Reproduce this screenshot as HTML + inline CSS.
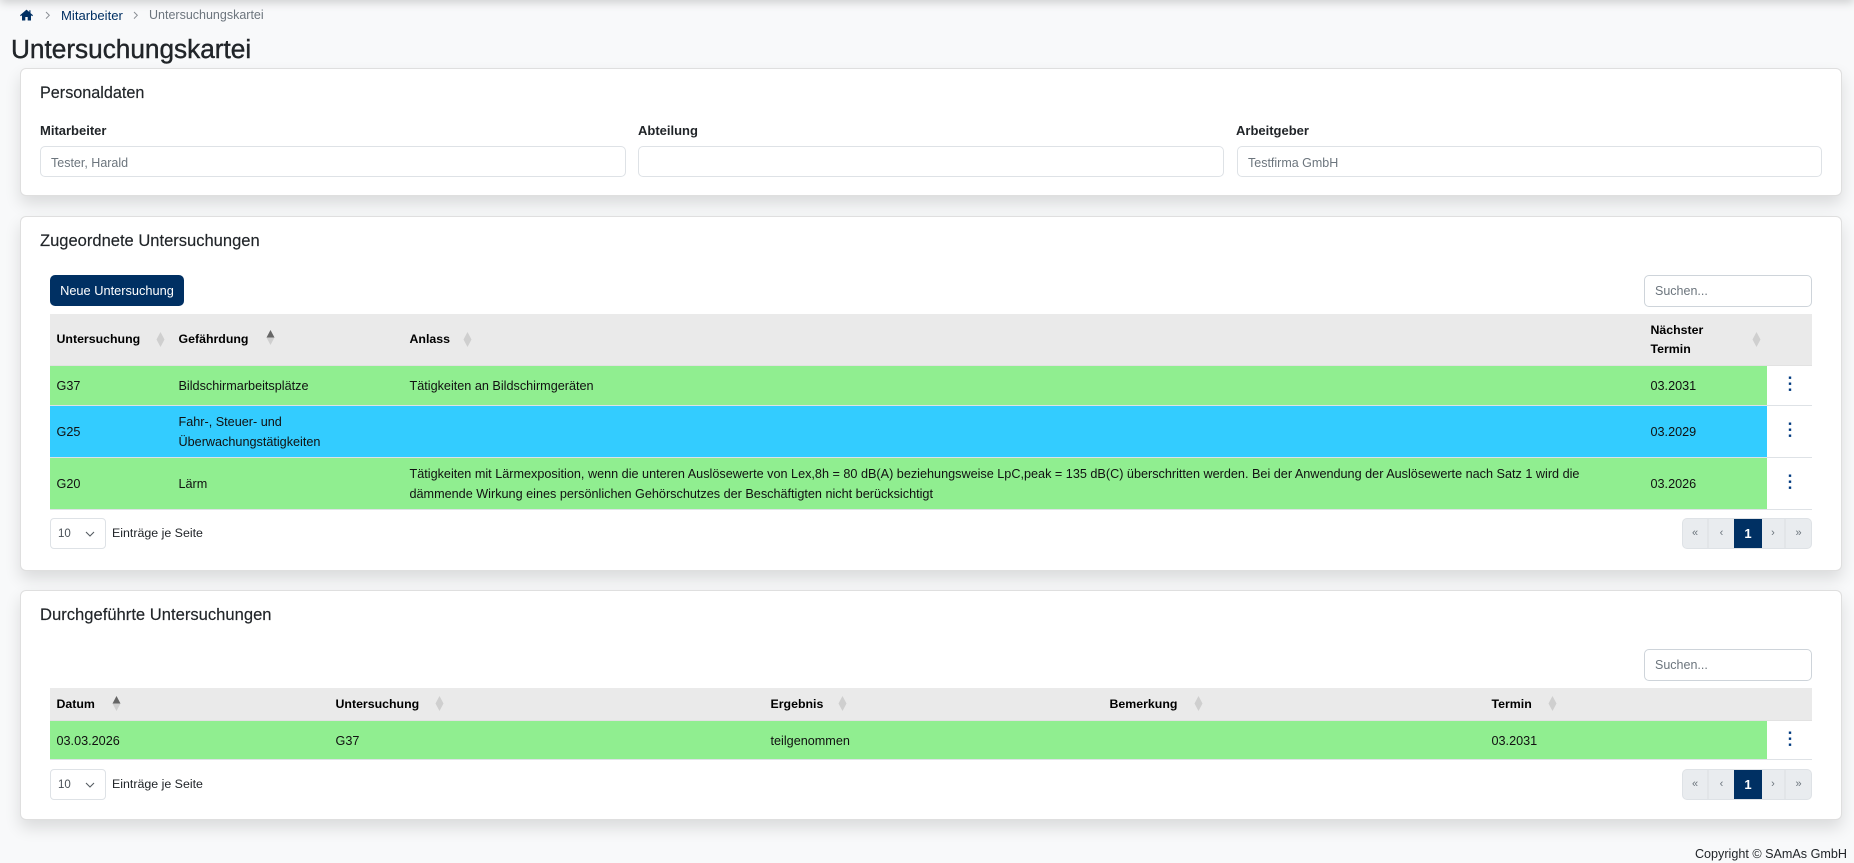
<!DOCTYPE html>
<html lang="de"><head><meta charset="utf-8"><title>Untersuchungskartei</title>
<style>
*{box-sizing:border-box}
html,body{margin:0;padding:0}
body{width:1854px;height:861px;overflow:hidden;position:relative;background:#f8f9fa;font-family:"Liberation Sans",sans-serif;font-size:13px;color:#111}
.top{position:absolute;left:0;top:-10px;width:1854px;height:10px;box-shadow:0 2px 10px rgba(0,0,0,.2)}
.a{position:absolute;white-space:nowrap}
.card{position:absolute;left:20px;width:1822px;background:#fff;border:1px solid rgba(0,0,0,.125);border-radius:6px;box-shadow:0 8px 16px rgba(0,0,0,.12)}
.title{position:absolute;left:40px;font-size:16.2px;line-height:20px;color:#212529;white-space:nowrap;-webkit-text-stroke:.15px #212529}
.lbl{position:absolute;font-size:13px;font-weight:bold;line-height:18px;color:#212529;white-space:nowrap}
.inp{position:absolute;height:31px;background:#fff;border:1px solid #dee2e6;border-radius:5px;padding-left:10px;font-size:12.5px;line-height:32px;color:#6c757d;white-space:nowrap}
.btn{position:absolute;left:50px;top:275px;width:134px;height:31px;background:#003063;border-radius:5px;color:#fff;font-size:12.8px;line-height:32px;text-align:center}
.search{position:absolute;left:1644px;width:168px;height:32px;border:1px solid #ced4da;border-radius:5px;background:#fff;padding-left:10px;font-size:12.5px;line-height:30px;color:#6c757d}
table{position:absolute;left:50px;width:1762px;table-layout:fixed;border-collapse:separate;border-spacing:0}
th,td{padding:0 0 0 6.5px;text-align:left;vertical-align:middle;font-size:12.65px;line-height:19px;color:#111;white-space:nowrap;overflow:visible}
th{background:#eaeaea;color:#000;font-weight:bold;font-size:12.35px;border-bottom:1px solid #e2e2e2;position:relative}
td{border-bottom:1px solid #dee2e6;padding-top:2px}
td.l{line-height:20px;padding-top:0}
.g{background:#90ee90}.b{background:#33ccff}
.s{position:absolute;width:9px;height:15px}
.k{position:absolute;width:4px;height:18px}
.sel{position:absolute;left:50px;width:56px;height:31px;border:1px solid #dee2e6;border-radius:4px;background:#fff;font-size:11.5px;line-height:31px;padding-left:7px;color:#495057}
.sel svg{position:absolute;left:34px;top:12px}
.pg{position:absolute;left:1682px;width:130px;height:31px;background:#e9ecef;border:1px solid #dee2e6;border-radius:5px;overflow:hidden;display:flex;font-size:11px;line-height:29px;color:#6c757d;text-align:center}
.pg span{display:block;height:100%;border-right:2px solid #e2e5e8}
.pg .on{background:#003063;color:#fff;font-weight:bold;font-size:13px;border:0;margin-top:-1px;height:31px;line-height:31px}
</style></head><body>
<div class="top"></div>

<svg class="a" style="left:20px;top:9px" width="13" height="12" viewBox="0 0 13 12"><path d="M6.5 .6 0 6.3l.8.9L2 6.2V11.500h3.300V8h2.400v3.500H11V6.200l1.200 1 .8-.9-2.500-2.200V1.200H9.300V3Z" fill="#003063"/></svg>
<svg class="a" style="left:45px;top:11px" width="6" height="9" viewBox="0 0 6 9"><path d="M1 1l3.300 3.300L1 7.600" fill="none" stroke="#8a8f94" stroke-width="1"/></svg>
<div class="a" style="left:61px;top:7px;font-size:13.1px;line-height:17px;color:#003063">Mitarbeiter</div>
<svg class="a" style="left:133px;top:11px" width="6" height="9" viewBox="0 0 6 9"><path d="M1 1l3.300 3.300L1 7.600" fill="none" stroke="#8a8f94" stroke-width="1"/></svg>
<div class="a" style="left:149px;top:7px;font-size:12.5px;line-height:17px;color:#6c757d">Untersuchungskartei</div>
<div class="a" style="left:11px;top:34px;font-size:26.2px;line-height:30px;color:#212529;-webkit-text-stroke:.4px #212529">Untersuchungskartei</div>

<div class="card" style="top:68px;height:128px"></div>
<div class="title" style="top:83px">Personaldaten</div>
<div class="lbl" style="left:40px;top:122px">Mitarbeiter</div>
<div class="lbl" style="left:638px;top:122px">Abteilung</div>
<div class="lbl" style="left:1236px;top:122px">Arbeitgeber</div>
<div class="inp" style="left:40px;top:146px;width:586px">Tester, Harald</div>
<div class="inp" style="left:638px;top:146px;width:586px"></div>
<div class="inp" style="left:1237px;top:146px;width:585px">Testfirma GmbH</div>

<div class="card" style="top:216px;height:355px"></div>
<div class="title" style="top:231px;font-size:16.55px">Zugeordnete Untersuchungen</div>
<div class="btn">Neue Untersuchung</div>
<div class="search" style="top:275px">Suchen...</div>
<table style="top:314px">
<colgroup><col style="width:122px"><col style="width:231px"><col style="width:1241px"><col style="width:123px"><col style="width:45px"></colgroup>
<tr style="height:52px"><th>Untersuchung</th><th>Gefährdung</th><th>Anlass</th><th>Nächster<br>Termin</th><th></th></tr>
<tr style="height:40px"><td class="g">G37</td><td class="g">Bildschirmarbeitsplätze</td><td class="g">Tätigkeiten an Bildschirmgeräten</td><td class="g">03.2031</td><td></td></tr>
<tr style="height:52px"><td class="b">G25</td><td class="b l">Fahr-, Steuer- und<br>Überwachungstätigkeiten</td><td class="b"></td><td class="b">03.2029</td><td></td></tr>
<tr style="height:52px"><td class="g">G20</td><td class="g">Lärm</td><td class="g l">Tätigkeiten mit Lärmexposition, wenn die unteren Auslösewerte von Lex,8h = 80 dB(A) beziehungsweise LpC,peak = 135 dB(C) überschritten werden. Bei der Anwendung der Auslösewerte nach Satz 1 wird die<br>dämmende Wirkung eines persönlichen Gehörschutzes der Beschäftigten nicht berücksichtigt</td><td class="g">03.2026</td><td></td></tr>
</table>
<svg class="s" style="left:156px;top:332px" viewBox="0 0 9 15"><path d="M4.500 0 8.500 7.500H.5Z" fill="#cfcfcf"/><path d="M4.500 15 8.500 7.500H.5Z" fill="#cfcfcf"/></svg>
<svg class="s" style="left:266px;top:330px" viewBox="0 0 9 15"><path d="M4.500 15 8.500 7.500H.5Z" fill="#cfcfcf"/><path d="M4.500 0 8.500 7.500H.5Z" fill="#666"/></svg>
<svg class="s" style="left:463px;top:332px" viewBox="0 0 9 15"><path d="M4.500 0 8.500 7.500H.5Z" fill="#cfcfcf"/><path d="M4.500 15 8.500 7.500H.5Z" fill="#cfcfcf"/></svg>
<svg class="s" style="left:1752px;top:332px" viewBox="0 0 9 15"><path d="M4.500 0 8.500 7.500H.5Z" fill="#cfcfcf"/><path d="M4.500 15 8.500 7.500H.5Z" fill="#cfcfcf"/></svg>
<svg class="k" style="left:1788px;top:376px" viewBox="0 0 4 18"><rect x=".8" y=".5" width="2.400" height="2.400" fill="#003a80"/><rect x=".8" y="6.500" width="2.400" height="2.400" fill="#003a80"/><rect x=".8" y="12.500" width="2.400" height="2.400" fill="#003a80"/></svg>
<svg class="k" style="left:1788px;top:422px" viewBox="0 0 4 18"><rect x=".8" y=".5" width="2.400" height="2.400" fill="#003a80"/><rect x=".8" y="6.500" width="2.400" height="2.400" fill="#003a80"/><rect x=".8" y="12.500" width="2.400" height="2.400" fill="#003a80"/></svg>
<svg class="k" style="left:1788px;top:474px" viewBox="0 0 4 18"><rect x=".8" y=".5" width="2.400" height="2.400" fill="#003a80"/><rect x=".8" y="6.500" width="2.400" height="2.400" fill="#003a80"/><rect x=".8" y="12.500" width="2.400" height="2.400" fill="#003a80"/></svg>
<div class="sel" style="top:518px">10<svg width="10" height="6" viewBox="0 0 10 6"><path d="M1 1l4 4 4-4" fill="none" stroke="#555b61" stroke-width="1.100"/></svg></div>
<div class="a" style="left:112px;top:524px;font-size:12.4px;line-height:18px;color:#212529">Einträge je Seite</div>
<div class="pg" style="top:518px"><span style="width:26px">«</span><span style="width:25px;border:0">‹</span><span class="on" style="width:28px">1</span><span style="width:24px">›</span><span style="width:25px;border:0">»</span></div>

<div class="card" style="top:590px;height:230px"></div>
<div class="title" style="top:605px;font-size:16.6px">Durchgeführte Untersuchungen</div>
<div class="search" style="top:649px">Suchen...</div>
<table style="top:688px">
<colgroup><col style="width:279px"><col style="width:435px"><col style="width:339px"><col style="width:382px"><col style="width:282px"><col style="width:45px"></colgroup>
<tr style="height:33px"><th>Datum</th><th>Untersuchung</th><th>Ergebnis</th><th>Bemerkung</th><th>Termin</th><th></th></tr>
<tr style="height:39px"><td class="g">03.03.2026</td><td class="g">G37</td><td class="g">teilgenommen</td><td class="g"></td><td class="g">03.2031</td><td></td></tr>
</table>
<svg class="s" style="left:112px;top:696px" viewBox="0 0 9 15"><path d="M4.500 15 8.500 7.500H.5Z" fill="#cfcfcf"/><path d="M4.500 0 8.500 7.500H.5Z" fill="#666"/></svg>
<svg class="s" style="left:435px;top:696px" viewBox="0 0 9 15"><path d="M4.500 0 8.500 7.500H.5Z" fill="#cfcfcf"/><path d="M4.500 15 8.500 7.500H.5Z" fill="#cfcfcf"/></svg>
<svg class="s" style="left:838px;top:696px" viewBox="0 0 9 15"><path d="M4.500 0 8.500 7.500H.5Z" fill="#cfcfcf"/><path d="M4.500 15 8.500 7.500H.5Z" fill="#cfcfcf"/></svg>
<svg class="s" style="left:1194px;top:696px" viewBox="0 0 9 15"><path d="M4.500 0 8.500 7.500H.5Z" fill="#cfcfcf"/><path d="M4.500 15 8.500 7.500H.5Z" fill="#cfcfcf"/></svg>
<svg class="s" style="left:1548px;top:696px" viewBox="0 0 9 15"><path d="M4.500 0 8.500 7.500H.5Z" fill="#cfcfcf"/><path d="M4.500 15 8.500 7.500H.5Z" fill="#cfcfcf"/></svg>
<svg class="k" style="left:1788px;top:731px" viewBox="0 0 4 18"><rect x=".8" y=".5" width="2.400" height="2.400" fill="#003a80"/><rect x=".8" y="6.500" width="2.400" height="2.400" fill="#003a80"/><rect x=".8" y="12.500" width="2.400" height="2.400" fill="#003a80"/></svg>
<div class="sel" style="top:769px">10<svg width="10" height="6" viewBox="0 0 10 6"><path d="M1 1l4 4 4-4" fill="none" stroke="#555b61" stroke-width="1.100"/></svg></div>
<div class="a" style="left:112px;top:775px;font-size:12.4px;line-height:18px;color:#212529">Einträge je Seite</div>
<div class="pg" style="top:769px"><span style="width:26px">«</span><span style="width:25px;border:0">‹</span><span class="on" style="width:28px">1</span><span style="width:24px">›</span><span style="width:25px;border:0">»</span></div>

<div class="a" style="right:7px;top:845px;font-size:12.6px;line-height:18px;color:#212529">Copyright © SAmAs GmbH</div>
</body></html>
